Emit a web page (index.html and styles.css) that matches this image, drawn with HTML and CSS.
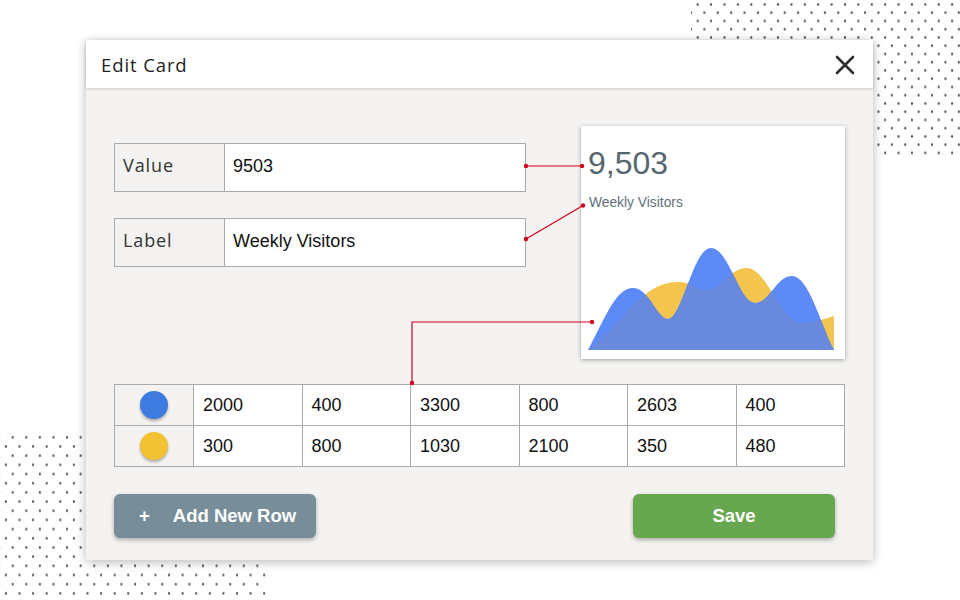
FILE: index.html
```html
<!DOCTYPE html>
<html>
<head>
<meta charset="utf-8">
<link rel="stylesheet" href="styles.css">
</head>
<body>
<div class="dots dots-tr"></div>
<div class="dots dots-bl"></div>
<div class="stage">
  <div class="modal">
    <div class="modal-header">
      <span class="modal-title">Edit Card</span>
      <svg class="close" width="20" height="20" viewBox="0 0 20 20"><path d="M2 2 L18 18 M18 2 L2 18" stroke="#2f2f2f" stroke-width="2.6" stroke-linecap="round" fill="none"/></svg>
    </div>
    <div class="modal-body">
      <div class="top">
        <div class="fields">
          <div class="field"><div class="field-label">Value</div><div class="field-input">9503</div></div>
          <div class="field"><div class="field-label">Label</div><div class="field-input">Weekly Visitors</div></div>
        </div>
        <div class="card">
          <div class="card-value">9,503</div>
          <div class="card-label">Weekly Visitors</div>
          <svg class="chart" width="264" height="140" viewBox="0 0 264 140">
            <defs>
              <clipPath id="blueclip"><path d="M7,131 C25,97 35,69 52,69 C68,69 76,100 87,100 C101,100 112,29 130,29 C148,29 158,84 174,84 C189,84 195,57 211,57 C228,57 240,107 253,131 Z"/></clipPath>
            </defs>
            <path d="M7,131 C40,107 60,63 96,63 C112,63 115,71 127,71 C140,71 148,49 166,49 C186,49 200,104 221,104 C235,104 245,99 253,97 L253,131 Z" fill="#f3c54e"/>
            <path d="M7,131 C25,97 35,69 52,69 C68,69 76,100 87,100 C101,100 112,29 130,29 C148,29 158,84 174,84 C189,84 195,57 211,57 C228,57 240,107 253,131 Z" fill="#5c8bf7"/>
            <path clip-path="url(#blueclip)" d="M7,131 C40,107 60,63 96,63 C112,63 115,71 127,71 C140,71 148,49 166,49 C186,49 200,104 221,104 C235,104 245,99 253,97 L253,131 Z" fill="#6889dc"/>
          </svg>
        </div>
      </div>
      <div class="grid">
        <div class="cell swatch-cell"><span class="swatch blue"></span></div>
        <div class="cell">2000</div><div class="cell">400</div><div class="cell">3300</div><div class="cell">800</div><div class="cell">2603</div><div class="cell">400</div>
        <div class="cell swatch-cell"><span class="swatch yellow"></span></div>
        <div class="cell">300</div><div class="cell">800</div><div class="cell">1030</div><div class="cell">2100</div><div class="cell">350</div><div class="cell">480</div>
      </div>
      <div class="actions">
        <div class="btn btn-add"><span class="plus">+</span><span>Add New Row</span></div>
        <div class="btn btn-save">Save</div>
      </div>
    </div>
  </div>
</div>
<svg class="connectors" width="960" height="600" viewBox="0 0 960 600">
  <g stroke="#d0021b" stroke-width="1.2" fill="none">
    <path d="M526 166 L582 166"/>
    <path d="M526 239 L583 205.5"/>
    <path d="M592 322 L412 322 L412 383"/>
  </g>
  <g fill="#d0021b">
    <circle cx="526" cy="166" r="2.2"/><circle cx="582" cy="166" r="2.2"/>
    <circle cx="526" cy="239" r="2.2"/><circle cx="583" cy="205.5" r="2.2"/>
    <circle cx="592" cy="322" r="2.2"/><circle cx="412" cy="383" r="2.2"/>
  </g>
</svg>
</body>
</html>
```
FILE: styles.css
```css
* { box-sizing: border-box; }
html, body { margin: 0; padding: 0; }
body {
  width: 960px;
  height: 600px;
  overflow: hidden;
  background: #ffffff;
  position: relative;
  font-family: "Liberation Sans", Arial, sans-serif;
}
.dots {
  position: absolute;
  background-image:
    radial-gradient(circle, #555 0.9px, rgba(85,85,85,0) 1.5px),
    radial-gradient(circle, #555 0.9px, rgba(85,85,85,0) 1.5px);
}
.dots-tr {
  left: 691px;
  top: 0;
  width: 269px;
  height: 158px;
  background-size: 13.4px 16.5px;
  background-position: 0 -3.8px, 6.7px 4.45px;
}
.dots-bl {
  left: 0;
  top: 432px;
  width: 268px;
  height: 168px;
  background-size: 13.6px 18.36px;
  background-position: 5.9px -3.88px, -0.9px 5.3px;
}
.stage {
  position: relative;
  z-index: 1;
  padding: 40px 0 0 86px;
}
.modal {
  width: 787px;
  height: 520px;
  background: #f4f3f1;
  box-shadow: 0 2px 10px rgba(0,0,0,0.28);
  display: flex;
  flex-direction: column;
}
.modal-header {
  height: 48px;
  background: #ffffff;
  display: flex;
  align-items: center;
  justify-content: space-between;
  padding: 0 18px 0 15px;
  box-shadow: 0 1px 3px rgba(0,0,0,0.18);
  position: relative;
  z-index: 1;
}
.modal-title {
  font-family: "Open Sans", "DejaVu Sans", sans-serif;
  font-size: 18.5px;
  letter-spacing: 0.9px;
  color: #222;
}
.close { display: block; margin-top: 2px; }
.modal-body {
  flex: 1;
  padding: 38px 28px 0 28px;
}
.top {
  display: flex;
  align-items: flex-start;
}
.fields {
  display: flex;
  flex-direction: column;
  gap: 26px;
  margin-top: 17px;
}
.field {
  width: 412px;
  height: 49px;
  border: 1px solid #aaa;
  display: flex;
}
.field-label {
  width: 110px;
  border-right: 1px solid #aaa;
  display: flex;
  align-items: center;
  padding-left: 8px;
  padding-bottom: 5px;
  font-family: "Open Sans", "DejaVu Sans", sans-serif;
  font-size: 18px;
  letter-spacing: 0.9px;
  color: #333;
}
.field-input {
  flex: 1;
  background: #fff;
  display: flex;
  align-items: center;
  padding-left: 8px;
  font-size: 18px;
  color: #111;
  padding-bottom: 3px;
}
.card {
  margin-left: auto;
  width: 264px;
  height: 233px;
  background: #fff;
  box-shadow: 0 1px 4px rgba(0,0,0,0.35);
  display: flex;
  flex-direction: column;
  padding-top: 21px;
}
.card-value {
  font-size: 32px;
  line-height: 32px;
  color: #56666f;
  padding-left: 7px;
}
.card-label {
  margin-top: 17px;
  font-size: 13.8px;
  line-height: 14px;
  color: #62707b;
  padding-left: 8px;
}
.chart { display: block; margin-top: auto; }
.grid {
  margin-top: 25px;
  width: 731px;
  display: grid;
  grid-template-columns: 79px repeat(6, 1fr);
  grid-auto-rows: 41px;
  border-left: 1px solid #aaa;
  border-top: 1px solid #aaa;
}
.cell {
  background: #fff;
  border-right: 1px solid #aaa;
  border-bottom: 1px solid #aaa;
  display: flex;
  align-items: center;
  padding-left: 9px;
  font-size: 18px;
  color: #111;
}
.swatch-cell {
  background: #f4f3f1;
  justify-content: center;
  padding-left: 0;
}
.swatch {
  width: 28px;
  height: 28px;
  border-radius: 50%;
  box-shadow: 0 2px 3px rgba(0,0,0,0.3);
}
.swatch.blue { background: #3d7be0; }
.swatch.yellow { background: #f2c232; }
.actions {
  margin-top: 27px;
  display: flex;
  justify-content: space-between;
  padding-right: 10px;
}
.btn {
  width: 202px;
  height: 44px;
  border-radius: 6px;
  box-shadow: 0 2px 4px rgba(0,0,0,0.3);
  display: flex;
  align-items: center;
  color: #fff;
  font-weight: bold;
  font-size: 18.5px;
}
.btn-add {
  background: #778d99;
  padding-left: 25px;
  gap: 23px;
}
.btn-save {
  background: #67a74f;
  justify-content: center;
}
.connectors {
  position: absolute;
  left: 0;
  top: 0;
  z-index: 2;
  pointer-events: none;
}
```
